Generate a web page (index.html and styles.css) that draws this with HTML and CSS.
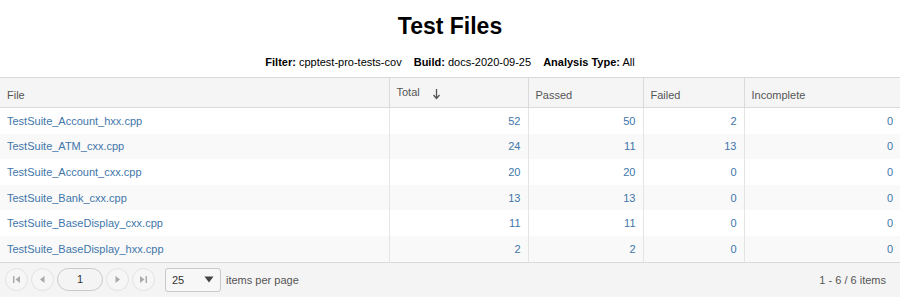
FILE: index.html
```html
<!DOCTYPE html>
<html lang="en">
<head>
    <meta charset="UTF-8">
    <title>Test Files</title>
    <link rel="stylesheet" href="styles.css">
</head>
<body>
    <h1 class="title">Test Files</h1>
    <p class="filters">
        <b>Filter:</b> cpptest-pro-tests-cov
        <b class="gap">Build:</b> docs-2020-09-25
        <b class="gap">Analysis Type:</b> All
    </p>

    <div class="grid">
        <table>
            <colgroup>
                <col style="width: 389px">
                <col style="width: 139px">
                <col style="width: 115px">
                <col style="width: 101px">
                <col>
            </colgroup>
            <thead>
                <tr>
                    <th>File</th>
                    <th class="sorted">Total
                        <svg class="sort-arrow" width="9" height="12" viewBox="0 0 9 12"><path d="M4.5 1v9M1.5 7l3 3.5 3-3.5" fill="none" stroke="#555" stroke-width="1.3"/></svg>
                    </th>
                    <th>Passed</th>
                    <th>Failed</th>
                    <th>Incomplete</th>
                </tr>
            </thead>
            <tbody>
                <tr><td><a href="#">TestSuite_Account_hxx.cpp</a></td><td class="num"><a href="#">52</a></td><td class="num"><a href="#">50</a></td><td class="num"><a href="#">2</a></td><td class="num"><a href="#">0</a></td></tr>
                <tr class="alt"><td><a href="#">TestSuite_ATM_cxx.cpp</a></td><td class="num"><a href="#">24</a></td><td class="num"><a href="#">11</a></td><td class="num"><a href="#">13</a></td><td class="num"><a href="#">0</a></td></tr>
                <tr><td><a href="#">TestSuite_Account_cxx.cpp</a></td><td class="num"><a href="#">20</a></td><td class="num"><a href="#">20</a></td><td class="num"><a href="#">0</a></td><td class="num"><a href="#">0</a></td></tr>
                <tr class="alt"><td><a href="#">TestSuite_Bank_cxx.cpp</a></td><td class="num"><a href="#">13</a></td><td class="num"><a href="#">13</a></td><td class="num"><a href="#">0</a></td><td class="num"><a href="#">0</a></td></tr>
                <tr><td><a href="#">TestSuite_BaseDisplay_cxx.cpp</a></td><td class="num"><a href="#">11</a></td><td class="num"><a href="#">11</a></td><td class="num"><a href="#">0</a></td><td class="num"><a href="#">0</a></td></tr>
                <tr class="alt"><td><a href="#">TestSuite_BaseDisplay_hxx.cpp</a></td><td class="num"><a href="#">2</a></td><td class="num"><a href="#">2</a></td><td class="num"><a href="#">0</a></td><td class="num"><a href="#">0</a></td></tr>
            </tbody>
        </table>

        <div class="pager">
            <div class="pager-nav">
                <span class="pager-btn">
                    <svg width="9" height="9" viewBox="0 0 9 9"><rect x="1" y="1" width="1.4" height="7" fill="#aaa"/><path d="M8 1v7L3.5 4.5z" fill="#aaa"/></svg>
                </span>
                <span class="pager-btn">
                    <svg width="9" height="9" viewBox="0 0 9 9"><path d="M6.5 1v7L2 4.5z" fill="#aaa"/></svg>
                </span>
                <span class="pager-input">1</span>
                <span class="pager-btn">
                    <svg width="9" height="9" viewBox="0 0 9 9"><path d="M2.5 1v7L7 4.5z" fill="#aaa"/></svg>
                </span>
                <span class="pager-btn">
                    <svg width="9" height="9" viewBox="0 0 9 9"><path d="M1 1v7l4.5-3.5z" fill="#aaa"/><rect x="6.6" y="1" width="1.4" height="7" fill="#aaa"/></svg>
                </span>
            </div>
            <div class="page-size">
                <span class="select">25
                    <svg width="10" height="7" viewBox="0 0 10 7"><path d="M0.5 0.5h9L5 6.5z" fill="#444"/></svg>
                </span>
                <span class="page-size-label">items per page</span>
            </div>
            <div class="pager-info">1 - 6 / 6 items</div>
        </div>
    </div>
</body>
</html>
```

FILE: styles.css
```css
body {
    margin: 0;
    padding: 0;
    font-family: "Liberation Sans", Arial, sans-serif;
    color: #000;
    background: #fff;
}

.title {
    margin: 0;
    padding-top: 12px;
    font-size: 23px;
    line-height: 29px;
    text-align: center;
    font-weight: bold;
}

.filters {
    margin: 14px 0 0 0;
    height: 22px;
    font-size: 11px;
    line-height: 14px;
    text-align: center;
}

.filters .gap {
    margin-left: 9px;
}

.grid {
    border-top: 1px solid #dadada;
    font-size: 11px;
}

table {
    width: 100%;
    border-collapse: collapse;
    table-layout: fixed;
}

th {
    background: #f5f5f5;
    color: #555;
    font-weight: normal;
    text-align: left;
    height: 25px;
    padding: 4px 7px 0 7px;
    border-left: 1px solid #dadada;
    border-bottom: 1px solid #dadada;
    vertical-align: middle;
}

th:first-child,
td:first-child {
    border-left: none;
}

th.sorted {
    vertical-align: top;
    padding-top: 8px;
    height: 21px;
}

.sort-arrow {
    margin-left: 9px;
    vertical-align: -4px;
}

td {
    height: 25.6px;
    padding: 0 7px;
    border-left: 1px solid #e4e4e4;
    vertical-align: middle;
}

tr.alt td {
    background: #f9f9f9;
}

td.num {
    text-align: right;
}

a {
    color: #4176aa;
    text-decoration: none;
}

.pager {
    display: flex;
    align-items: center;
    height: 34px;
    background: #f4f4f4;
    border-top: 1px solid #dadada;
    color: #555;
    font-size: 11px;
    padding: 0 14px 0 5px;
}

.pager-nav {
    display: flex;
    align-items: center;
    gap: 3px;
}

.pager-btn {
    display: flex;
    align-items: center;
    justify-content: center;
    width: 21px;
    height: 21px;
    border: 1px solid #e2e2e2;
    border-radius: 50%;
    background: #f6f6f6;
}

.pager-input {
    width: 44px;
    height: 21px;
    line-height: 21px;
    text-align: center;
    border: 1px solid #c9c9c9;
    border-radius: 12px;
    background: #f4f4f4;
    color: #333;
}

.page-size {
    display: flex;
    align-items: center;
    margin-left: 10px;
}

.select {
    display: flex;
    align-items: center;
    justify-content: space-between;
    width: 42px;
    height: 22px;
    padding: 0 6px;
    border: 1px solid #c9c9c9;
    border-radius: 3px;
    background: #f7f7f7;
    color: #333;
}

.page-size-label {
    margin-left: 5px;
}

.pager-info {
    margin-left: auto;
}
```
